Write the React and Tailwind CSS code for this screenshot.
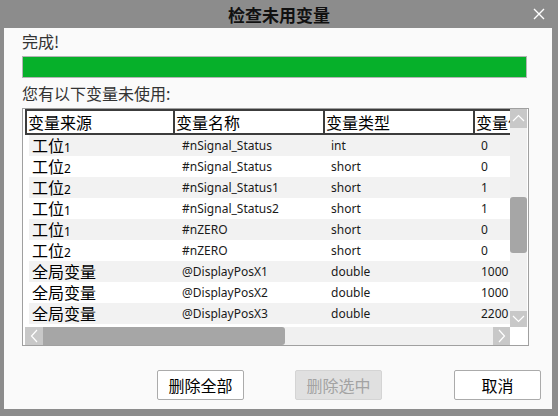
import React from "react";

const rows = [
  ["工位", "1", "#nSignal_Status", "int", "0"],
  ["工位", "2", "#nSignal_Status", "short", "0"],
  ["工位", "2", "#nSignal_Status1", "short", "1"],
  ["工位", "1", "#nSignal_Status2", "short", "1"],
  ["工位", "1", "#nZERO", "short", "0"],
  ["工位", "2", "#nZERO", "short", "0"],
  ["全局变量", "", "@DisplayPosX1", "double", "1000"],
  ["全局变量", "", "@DisplayPosX2", "double", "1000"],
  ["全局变量", "", "@DisplayPosX3", "double", "2200"],
  ["全局变量", "", "@DisplayPosX4", "double", "2200"],
];

const cjk = { fontFamily: '"Noto Sans CJK SC", sans-serif' };
const latin = { fontFamily: '"Noto Sans", "Noto Sans CJK SC", sans-serif' };

function Chevron({ dir }) {
  const d = {
    up: "M3 11 L8.5 5.5 L14 11",
    down: "M3 6 L8.5 11.5 L14 6",
    left: "M11 3 L5.5 9 L11 15",
    right: "M6 3 L11.5 9 L6 15",
  }[dir];
  return (
    <svg width="17" height="18" viewBox="0 0 17 18" className="block">
      <path d={d} fill="none" stroke="#ffffff" strokeWidth="1.2" />
    </svg>
  );
}

function HeaderCell({ w, children, first }) {
  return (
    <div
      className={`h-[26px] shrink-0 border-y-2 border-r-2 border-[#3c3c3c] pl-px text-[16px] leading-[22px] text-black overflow-hidden whitespace-nowrap ${first ? "border-l-2" : ""}`}
      style={{ ...cjk, width: w }}
    >
      {children}
    </div>
  );
}

export default function App() {
  return (
    <div className="w-[558px] h-[416px] bg-[#8c8c8c] flex flex-col overflow-hidden">
      <div className="h-[28px] shrink-0 relative flex items-center justify-center">
        <span className="text-[17px] font-bold text-[#111] leading-none" style={cjk}>
          检查未用变量
        </span>
        <svg width="12" height="12" viewBox="0 0 12 12" className="absolute left-[533px] top-[8px]">
          <path d="M1 1 L11 11 M11 1 L1 11" stroke="#ffffff" strokeWidth="1.4" />
        </svg>
      </div>

      <div className="ml-[4px] w-[548px] h-[381px] bg-[#fafafa] px-[18px] pt-[3px] flex flex-col">
        <div className="h-[20px] text-[16px] leading-[20px] text-[#333]" style={cjk}>
          完成!
        </div>
        <div className="mt-[5px] w-[505px] h-[22px] border border-[#b4b4b4] bg-[#06b02a]" />
        <div className="mt-[5px] h-[20px] text-[16px] leading-[20px] text-[#333]" style={cjk}>
          您有以下变量未使用:
        </div>

        <div className="mt-[5px] w-[507px] h-[238px] border border-[#a0a0a0] bg-white flex flex-col">
          <div className="flex h-[218px]">
            <div className="w-[2px] shrink-0" />
            <div className="w-[485px] shrink-0 overflow-hidden flex flex-col">
              <div className="flex w-[560px]">
                <HeaderCell w={150} first>变量来源</HeaderCell>
                <HeaderCell w={150}>变量名称</HeaderCell>
                <HeaderCell w={150}>变量类型</HeaderCell>
                <HeaderCell w={110}>变量值</HeaderCell>
              </div>
              <div className="pl-[4px] flex flex-col">
                {rows.map((r, i) => (
                  <div
                    key={i}
                    className={`flex h-[21px] shrink-0 items-center w-[556px] ${i % 2 === 0 ? "bg-[#f2f2f2]" : "bg-white"}`}
                  >
                    <div className="w-[146px] h-[21px] shrink-0 pl-[3px] text-black whitespace-nowrap leading-[21px]">
                      <span className="text-[16px]" style={cjk}>{r[0]}</span>
                      <span className="text-[12px]" style={latin}>{r[1]}</span>
                    </div>
                    <div className="w-[150px] shrink-0 pl-[7px] text-[12px] text-[#1a1a1a] whitespace-nowrap" style={latin}>
                      {r[2]}
                    </div>
                    <div className="w-[150px] shrink-0 pl-[6px] text-[12px] text-[#1a1a1a] whitespace-nowrap" style={latin}>
                      {r[3]}
                    </div>
                    <div className="w-[110px] shrink-0 pl-[6px] text-[12px] text-[#1a1a1a] whitespace-nowrap" style={latin}>
                      {r[4]}
                    </div>
                  </div>
                ))}
              </div>
            </div>
            <div className="w-[17px] shrink-0 bg-[#f0f0f0] flex flex-col">
              <div className="h-[19px] bg-[#c8c8c8] flex items-center justify-center">
                <Chevron dir="up" />
              </div>
              <div className="flex-1 relative">
                <div className="absolute left-0 right-0 top-[69px] h-[56px] rounded-[3px] bg-[#a6a6a6]" />
              </div>
              <div className="h-[16px] bg-[#c8c8c8] flex items-center justify-center overflow-hidden">
                <Chevron dir="down" />
              </div>
            </div>
            <div className="w-px shrink-0" />
          </div>
          <div className="flex h-[18px]">
            <div className="w-[2px] shrink-0" />
            <div className="w-[485px] shrink-0 bg-[#f0f0f0] flex">
              <div className="w-[18px] shrink-0 bg-[#c8c8c8] flex items-center justify-center">
                <Chevron dir="left" />
              </div>
              <div className="w-[242px] shrink-0 bg-[#a6a6a6] rounded-r-[3px]" />
              <div className="flex-1" />
              <div className="w-[17px] shrink-0 bg-[#c8c8c8] flex items-center justify-center">
                <Chevron dir="right" />
              </div>
            </div>
            <div className="w-[18px] shrink-0 bg-white" />
          </div>
        </div>

        <div className="mt-[24px] flex h-[30px]">
          <div className="ml-[135px] w-[87px] h-[30px] shrink-0 border border-[#ababab] rounded-[2px] bg-white flex items-center justify-center text-[16px] text-black" style={cjk}>
            删除全部
          </div>
          <div className="ml-[51px] w-[87px] h-[30px] shrink-0 border border-[#d4d4d4] rounded-[2px] bg-[#e0e0e0] flex items-center justify-center text-[16px] text-[#a3a3a3]" style={cjk}>
            删除选中
          </div>
          <div className="ml-[72px] w-[87px] h-[30px] shrink-0 border border-[#ababab] rounded-[2px] bg-white flex items-center justify-center text-[16px] text-black" style={cjk}>
            取消
          </div>
        </div>
      </div>
    </div>
  );
}
